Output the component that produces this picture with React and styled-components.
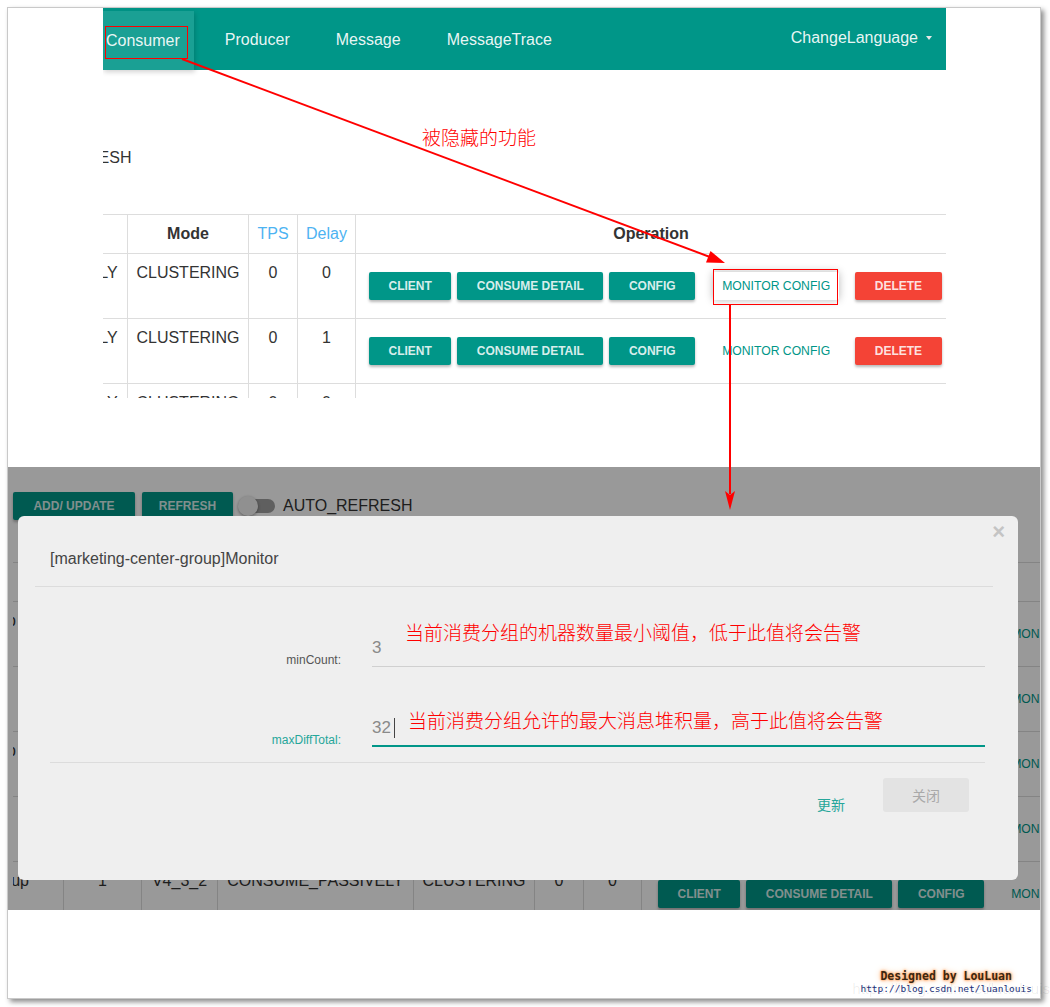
import React from "react";
import styled, { createGlobalStyle } from "styled-components";

const GlobalStyle = createGlobalStyle`
  html, body { margin: 0; padding: 0; background: #fff; }
  body { font-family: "Liberation Sans", Arial, "Noto Sans CJK SC", sans-serif; }
  * { box-sizing: border-box; }
`;

const teal = "#009688";
const COLS = "160px 78px 76px 196px 121px 49px 58px 590px";

const Page = styled.div`
  width: 1050px;
  height: 1007px;
  padding: 7px 0 0 7px;
  background: #fff;
  overflow: hidden;
`;

const Frame = styled.div`
  position: relative;
  width: 1034px;
  height: 992px;
  border: 1px solid #c9c9c9;
  box-shadow: 3px 3px 5px rgba(0, 0, 0, 0.45);
  background: #fff;
  display: flex;
  flex-direction: column;
`;

const TopShot = styled.section`
  flex-shrink: 0;
  height: 459px;
  padding-left: 95px;
  overflow: hidden;
`;

const Container = styled.div`
  width: 843px;
  height: 100%;
  overflow: hidden;
`;

const Nav = styled.nav`
  height: 62px;
  padding-top: 2px;
  background: ${teal};
  display: flex;
  align-items: stretch;
`;

const NavItem = styled.a`
  display: flex;
  align-items: center;
  padding: ${(p) => (p.$active ? "0 14px 0 3px" : "0 23px")};
  margin: ${(p) => (p.$active ? "1px 8px 0 0" : "0")};
  background: ${(p) => (p.$active ? "rgba(255,255,255,0.1)" : "transparent")};
  box-shadow: ${(p) => (p.$active ? "1px 2px 5px rgba(0,0,0,0.18)" : "none")};
  color: rgba(255, 255, 255, 0.93);
  font-size: 16px;
  white-space: nowrap;
`;

const NavRight = styled.div`
  margin-left: auto;
  display: flex;
  align-items: center;
  padding: 0 14px 4px 0;
  color: rgba(255, 255, 255, 0.93);
  font-size: 16px;
`;

const Caret = styled.span`
  margin-left: 8px;
  border-top: 4px solid #e6e6e6;
  border-left: 3px solid transparent;
  border-right: 3px solid transparent;
`;

const Toolbar = styled.div`
  display: flex;
  align-items: center;
  gap: 7px;
  height: 28px;
  margin-top: ${(p) => p.$top}px;
  margin-left: ${(p) => p.$shift}px;
`;

const RaisedButton = styled.button`
  flex-shrink: 0;
  height: 28px;
  padding: 0 19.5px;
  margin-right: 6px;
  border: 0;
  border-radius: 2px;
  background: ${(p) => (p.$danger ? "#f44336" : teal)};
  color: rgba(255, 255, 255, 0.86);
  font: bold 12px "Liberation Sans", Arial, sans-serif;
  text-transform: uppercase;
  white-space: nowrap;
  box-shadow: 0 2px 3px rgba(0, 0, 0, 0.28);
`;

const ToolButton = styled(RaisedButton)`
  width: ${(p) => p.$w}px;
  padding: 0;
  margin: 0;
`;

const FlatButton = styled.button`
  flex-shrink: 0;
  height: 28px;
  padding: 0 9px;
  margin: 0 16px 0 12px;
  border: 0;
  border-radius: 2px;
  background: ${(p) => (p.$hover ? "#fff" : "transparent")};
  box-shadow: ${(p) => (p.$hover ? "0 0 9px rgba(0,0,0,0.28)" : "none")};
  color: ${teal};
  font: 12.2px "Liberation Sans", Arial, sans-serif;
  white-space: nowrap;
`;

const Switch = styled.span`
  position: relative;
  flex-shrink: 0;
  width: 35px;
  height: 14px;
  border-radius: 7px;
  background: rgba(0, 0, 0, 0.38);
  &::after {
    content: "";
    position: absolute;
    left: -2px;
    top: -3px;
    width: 20px;
    height: 20px;
    border-radius: 50%;
    background: #f1f1f1;
    box-shadow: 0 1px 3px rgba(0, 0, 0, 0.4);
  }
`;

const ToolLabel = styled.span`
  margin-left: 1px;
  font-size: 16px;
  color: #333;
  white-space: nowrap;
`;

const TableClip = styled.div`
  margin-top: 42px;
  height: ${(p) => (p.$h ? `${p.$h}px` : "auto")};
  overflow: hidden;
`;

const Table = styled.div`
  width: 1328px;
  margin-left: ${(p) => p.$shift}px;
  border-top: 1px solid #ddd;
  color: #333;
  font-size: 16px;
`;

const Row = styled.div`
  display: grid;
  grid-template-columns: ${COLS};
  height: ${(p) => (p.$head ? 39 : 65)}px;
  border-bottom: 1px solid #ddd;
`;

const HeadCell = styled.div`
  display: flex;
  align-items: center;
  justify-content: center;
  border-right: ${(p) => (p.$last ? "0" : "1px solid #ddd")};
  color: ${(p) => (p.$info ? "#4db3f2" : "#333")};
  font-weight: ${(p) => (p.$info ? "normal" : "bold")};
  white-space: nowrap;
  overflow: hidden;
`;

const Cell = styled.div`
  border-right: 1px solid #ddd;
  padding: 10px 0 0;
  text-align: center;
  line-height: 18px;
  white-space: nowrap;
  overflow: hidden;
`;

const NameCell = styled(Cell)`
  display: flex;
  justify-content: flex-end;
  align-items: flex-start;
  padding-right: ${(p) => p.$pad}px;
`;

const OpCell = styled.div`
  display: flex;
  align-items: center;
  padding-left: ${(p) => p.$indent}px;
`;

const BottomShot = styled.section`
  position: relative;
  flex-shrink: 0;
  height: 443px;
  overflow: hidden;
`;

const Underlay = styled.div`
  padding: 25px 0 0 5px;
`;

const Dim = styled.div`
  position: absolute;
  inset: 0;
  background: rgba(0, 0, 0, 0.4);
`;

const Modal = styled.div`
  position: absolute;
  left: 10px;
  top: 49px;
  width: 1000px;
  height: 364px;
  background: #efefef;
  border-radius: 6px;
`;

const Close = styled.span`
  position: absolute;
  right: 13px;
  top: 5px;
  font-size: 22px;
  line-height: 22px;
  font-weight: bold;
  color: #c4c4c4;
`;

const ModalTitle = styled.h4`
  margin: 0;
  padding: 33px 32px 0;
  font-size: 16px;
  line-height: 20px;
  font-weight: normal;
  color: #444;
`;

const Divider = styled.hr`
  margin: ${(p) => p.$m};
  border: 0;
  border-top: 1px solid #dcdcdc;
`;

const FormRow = styled.div`
  display: grid;
  grid-template-columns: 323px 1fr;
  column-gap: 31px;
  align-items: end;
  margin-top: 43px;
  padding-right: 33px;
`;

const Label = styled.label`
  text-align: right;
  font-size: 12px;
  line-height: 14px;
  color: ${(p) => (p.$focus ? "#26a69a" : "#555")};
`;

const Input = styled.div`
  height: 37px;
  display: flex;
  align-items: center;
  border-bottom: ${(p) => (p.$focus ? `2px solid ${teal}` : "1px solid #d0d0d0")};
  font-size: 17px;
  color: #8a8a8a;
`;

const Cursor = styled.span`
  width: 1px;
  height: 20px;
  margin-left: 3px;
  background: #444;
`;

const ModalFooter = styled.div`
  display: flex;
  justify-content: flex-end;
  align-items: flex-start;
  gap: 38px;
  padding: 15px 49px 0 0;
`;

const TextButton = styled.button`
  padding: 18px 0 0;
  border: 0;
  background: transparent;
  font: 14px/16px "Noto Sans CJK SC", sans-serif;
  color: #26a69a;
`;

const GreyButton = styled.button`
  width: 86px;
  height: 34px;
  border: 0;
  border-radius: 3px;
  background: #e3e3e3;
  color: #a9a9a9;
  font: 14px "Noto Sans CJK SC", sans-serif;
`;

const Footer = styled.footer`
  flex: 1;
  display: flex;
  flex-direction: column;
  align-items: flex-end;
  justify-content: flex-end;
  padding: 0 8px 3px 0;
`;

const Watermark = styled.div`
  position: relative;
  display: flex;
  flex-direction: column;
  align-items: center;
`;

const Signature = styled.span`
  position: relative;
  font: bold 11.5px/14px "DejaVu Sans Mono", monospace;
  color: #3b2712;
  text-shadow: 0 0 3px #ff9a4d, 0 0 6px #ffb27a, 0 0 2px #ffa060;
`;

const Url = styled.span`
  position: relative;
  font: 9.5px/12px "DejaVu Sans Mono", monospace;
  color: #1b2f78;
`;

const Ghost = styled.span`
  position: absolute;
  right: -18px;
  bottom: -2px;
  font: 15px "Liberation Sans", sans-serif;
  color: rgba(0, 0, 0, 0.07);
  white-space: nowrap;
`;

const Arrows = styled.svg`
  position: absolute;
  left: 0;
  top: 0;
  pointer-events: none;
`;

const RedBox = styled.div`
  position: absolute;
  left: ${(p) => p.$x}px;
  top: ${(p) => p.$y}px;
  width: ${(p) => p.$w}px;
  height: ${(p) => p.$h}px;
  border: 1px solid #f00;
  pointer-events: none;
`;

const RedNote = styled.div`
  position: absolute;
  left: ${(p) => p.$x}px;
  top: ${(p) => p.$y}px;
  font: 300 19px/22px "Noto Sans CJK SC", sans-serif;
  color: #f00;
  white-space: nowrap;
`;

const HEAD = ["#Group", "Quantity", "Version", "Type", "Mode", "TPS", "Delay"];

const topRows = [
  { group: "please_rename_unique_group", pad: 34, delay: 0, hover: true },
  { group: "marketing-center-group", pad: 34, delay: 1 },
  { group: "order-group", pad: 34, delay: 0 },
];

const bottomRows = [
  { group: "marketing-center-group", pad: 47, delay: 0 },
  { group: "gp", pad: 60, delay: 1 },
  { group: "member-center-group", pad: 47, delay: 0 },
  { group: "gp", pad: 60, delay: 0 },
  { group: "coupon-group", pad: 34, delay: 0 },
];

function ConsumerToolbar({ top, shift }) {
  return (
    <Toolbar $top={top} $shift={shift}>
      <ToolButton $w={122}>ADD/ UPDATE</ToolButton>
      <ToolButton $w={91}>REFRESH</ToolButton>
      <Switch />
      <ToolLabel>AUTO_REFRESH</ToolLabel>
    </Toolbar>
  );
}

function ConsumerTable({ rows, shift, indent }) {
  return (
    <Table $shift={shift}>
      <Row $head>
        {HEAD.map((h) => (
          <HeadCell key={h} $info={h === "TPS" || h === "Delay"}>
            {h}
          </HeadCell>
        ))}
        <HeadCell $last>Operation</HeadCell>
      </Row>
      {rows.map((r, i) => (
        <Row key={i}>
          <NameCell $pad={r.pad}>{r.group}</NameCell>
          <Cell>1</Cell>
          <Cell>V4_3_2</Cell>
          <Cell>CONSUME_PASSIVELY</Cell>
          <Cell>CLUSTERING</Cell>
          <Cell>0</Cell>
          <Cell>{r.delay}</Cell>
          <OpCell $indent={indent}>
            <RaisedButton>Client</RaisedButton>
            <RaisedButton>Consume Detail</RaisedButton>
            <RaisedButton>Config</RaisedButton>
            <FlatButton $hover={r.hover}>MONITOR CONFIG</FlatButton>
            <RaisedButton $danger>Delete</RaisedButton>
          </OpCell>
        </Row>
      ))}
    </Table>
  );
}

export default function App() {
  return (
    <Page>
      <GlobalStyle />
      <Frame>
        <TopShot>
          <Container>
            <Nav>
              <NavItem $active>Consumer</NavItem>
              <NavItem>Producer</NavItem>
              <NavItem>Message</NavItem>
              <NavItem>MessageTrace</NavItem>
              <NavRight>
                ChangeLanguage
                <Caret />
              </NavRight>
            </Nav>
            <ConsumerToolbar top={74} shift={-371} />
            <TableClip $h={184}>
              <ConsumerTable rows={topRows} shift={-485} indent={13} />
            </TableClip>
          </Container>
        </TopShot>

        <BottomShot>
          <Underlay>
            <ConsumerToolbar top={0} shift={0} />
            <TableClip>
              <ConsumerTable rows={bottomRows} shift={-109} indent={16} />
            </TableClip>
          </Underlay>
          <Dim />
          <Modal>
            <Close>×</Close>
            <ModalTitle>[marketing-center-group]Monitor</ModalTitle>
            <Divider $m="17px 25px 0 17px" />
            <FormRow>
              <Label>minCount:</Label>
              <Input>3</Input>
            </FormRow>
            <FormRow>
              <Label $focus>maxDiffTotal:</Label>
              <Input $focus>
                32
                <Cursor />
              </Input>
            </FormRow>
            <Divider $m="15px 33px 0 32px" />
            <ModalFooter>
              <TextButton>更新</TextButton>
              <GreyButton>关闭</GreyButton>
            </ModalFooter>
          </Modal>
        </BottomShot>

        <Footer>
          <Watermark>
            <Ghost>https://blog.csdn.net/luanlouis</Ghost>
            <Signature>Designed by LouLuan</Signature>
            <Url>http://blog.csdn.net/luanlouis</Url>
          </Watermark>
        </Footer>

        <RedBox $x={97} $y={18} $w={83} $h={33} />
        <RedBox $x={705} $y={261} $w={125} $h={36} />
        <RedNote $x={414} $y={118}>被隐藏的功能</RedNote>
        <RedNote $x={397} $y={613}>当前消费分组的机器数量最小阈值，低于此值将会告警</RedNote>
        <RedNote $x={400} $y={701}>当前消费分组允许的最大消息堆积量，高于此值将会告警</RedNote>

        <Arrows width="1032" height="990" viewBox="0 0 1032 990">
          <line x1="174" y1="51" x2="702" y2="249" stroke="#f00" strokeWidth="2" />
          <polygon points="717,255 698,254.5 702.5,243" fill="#f00" />
          <line x1="722" y1="297" x2="722" y2="486" stroke="#f00" strokeWidth="2" />
          <polygon points="722,502 717,483 722,487 727,483" fill="#f00" />
        </Arrows>
      </Frame>
    </Page>
  );
}
